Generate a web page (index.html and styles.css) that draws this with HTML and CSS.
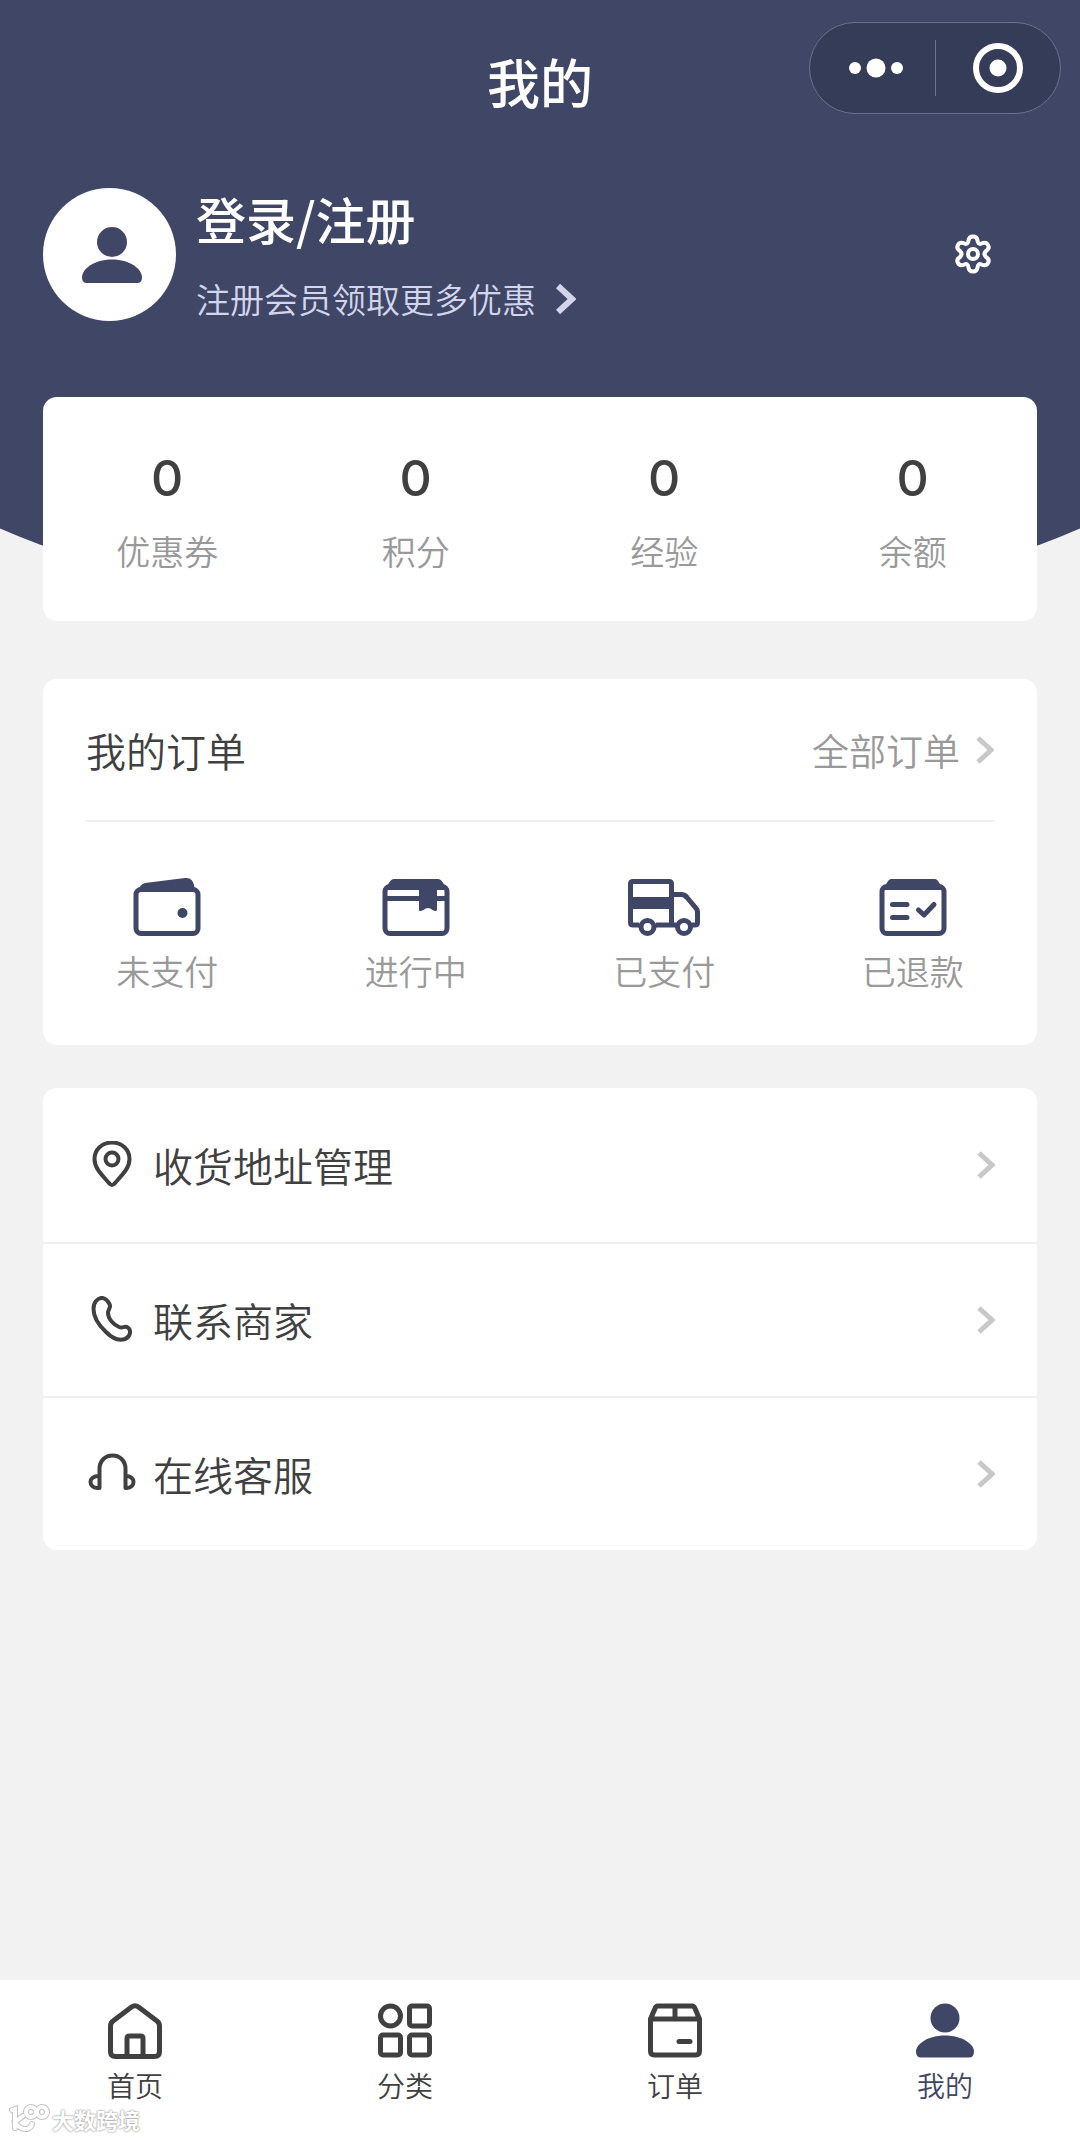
FILE: index.html
```html
<!DOCTYPE html>
<html lang="zh-CN">
<head>
<meta charset="utf-8">
<meta name="viewport" content="width=device-width, initial-scale=1">
<title>我的</title>
<link rel="stylesheet" href="styles.css">
</head>
<body>
<div class="page">
  <header class="hero">
    <div class="navbar">
      <h1 class="navbar-title">我的</h1>
      <div class="capsule">
        <button class="capsule-btn" type="button" aria-label="更多">
          <svg width="60" height="20" viewBox="0 0 60 20" fill="currentColor"><circle cx="12" cy="10" r="6"/><circle cx="33" cy="10" r="9.500"/><circle cx="54" cy="10" r="6"/></svg>
        </button>
        <button class="capsule-btn" type="button" aria-label="关闭">
          <svg width="52" height="52" viewBox="0 0 52 52"><circle cx="26" cy="26" r="22" fill="none" stroke="currentColor" stroke-width="6"/><circle cx="26" cy="26" r="8.500" fill="currentColor"/></svg>
        </button>
      </div>
    </div>

    <div class="profile">
      <div class="avatar">
        <svg width="64" height="57" viewBox="0 0 64 57" fill="currentColor"><circle cx="34" cy="16" r="15"/><path d="M34 33.500C52 33.500 64 43 64 51.500Q64 57 59 57H9Q4 57 4 51.500C4 43 16 33.500 34 33.500Z"/></svg>
      </div>
      <div class="profile-text">
        <a class="profile-login" href="#login">登录/注册</a>
        <a class="profile-promo" href="#member">注册会员领取更多优惠
          <svg width="20" height="32" viewBox="0 0 20 32" fill="none" stroke="currentColor" stroke-width="6"><path d="M2 3L16 16L2 29"/></svg>
        </a>
      </div>
      <button class="settings" type="button" aria-label="设置">
        <svg width="36" height="40" viewBox="0 0 36 40" fill="none" stroke="currentColor" stroke-width="4" stroke-linejoin="round"><path d="M13.500 6.500Q14 2.500 18 2.500T22.500 6.500Q23 11 26.500 9.500Q31 7.500 33 11T31 17Q28 20 31 23Q35 25.500 33 29T26.500 30.500Q23 29 22.500 33.500Q22 37.500 18 37.500T13.500 33.500Q13 29 9.500 30.500Q5 32.500 3 29T5 23Q8 20 5 17Q1 14.500 3 11T9.500 9.500Q13 11 13.500 6.500Z"/><circle cx="18" cy="20" r="5"/></svg>
      </button>
    </div>

    <section class="card stats" aria-label="账户">
      <a class="stat" href="#coupons"><span class="stat-value">0</span><span class="caption">优惠券</span></a>
      <a class="stat" href="#points"><span class="stat-value">0</span><span class="caption">积分</span></a>
      <a class="stat" href="#exp"><span class="stat-value">0</span><span class="caption">经验</span></a>
      <a class="stat" href="#balance"><span class="stat-value">0</span><span class="caption">余额</span></a>
    </section>
  </header>

  <main class="content">
    <section class="card orders">
      <div class="orders-head">
        <h2 class="orders-title">我的订单</h2>
        <a class="orders-all" href="#orders">全部订单
          <svg class="chevron" viewBox="0 0 18 28"><path d="M2 2L15 14L2 26"/></svg>
        </a>
      </div>
      <div class="orders-grid">
        <a class="order-link" href="#unpaid">
          <svg width="68" height="60" viewBox="0 0 68 60"><path d="M5 14Q7 7 12 6L52 1Q60 0 61.500 10L64 15H4Z" fill="currentColor"/><rect x="3" y="12.500" width="62" height="44" rx="5" fill="none" stroke="currentColor" stroke-width="5"/><circle cx="49.500" cy="36" r="5" fill="currentColor"/></svg>
          <span class="caption">未支付</span>
        </a>
        <a class="order-link" href="#processing">
          <svg width="68" height="60" viewBox="0 0 68 60"><path d="M5 10Q8 2 12 2H56Q60 2 63 10V13H5ZM37 10H55V33Q54 35 50.500 33Q46 29 41.500 33Q37 35 37 33Z" fill="currentColor"/><path d="M3 21.500H65" stroke="currentColor" stroke-width="5"/><rect x="3" y="9.500" width="62" height="47" rx="5" fill="none" stroke="currentColor" stroke-width="5"/></svg>
          <span class="caption">进行中</span>
        </a>
        <a class="order-link" href="#paid">
          <svg width="74" height="60" viewBox="0 0 74 60" fill="none" stroke="currentColor" stroke-width="5" stroke-linejoin="round"><path d="M12 48H6Q3.500 48 3.500 45.500V7Q3.500 4.500 6 4.500H42Q44.500 4.500 44.500 7V48M29 48H49M44.500 17.500H54Q58 17.500 60 20.500L68 30Q70.500 32.500 70.500 35V45.500Q70.500 48 68 48H65"/><path d="M4 26H44" stroke-width="12"/><circle cx="20.500" cy="50" r="6.500"/><circle cx="57" cy="50" r="6.500"/></svg>
          <span class="caption">已支付</span>
        </a>
        <a class="order-link" href="#refunded">
          <svg width="68" height="60" viewBox="0 0 68 60"><path d="M6 10Q9 2 12 2H56Q59 2 62 10V13H6Z" fill="currentColor"/><g fill="none" stroke="currentColor" stroke-width="5"><rect x="3" y="9.500" width="62" height="47" rx="5"/><path stroke-linecap="round" d="M13.500 27.500H28M13.500 40.500H28"/><path stroke-linecap="round" stroke-linejoin="round" d="M39.500 33L45 38L55 27.500"/></g></svg>
          <span class="caption">已退款</span>
        </a>
      </div>
    </section>

    <nav class="card menu" aria-label="服务">
      <a class="menu-row" href="#address">
        <svg class="menu-icon" viewBox="0 0 48 48"><path d="M24 44Q22.500 44 21 42C13 33 6.500 27 6.500 18C6.500 8.500 14 1.500 24 1.500S41.500 8.500 41.500 18C41.500 27 35 33 27 42Q25.500 44 24 44Z"/><circle cx="24" cy="18" r="6.500"/></svg>
        <span class="menu-label">收货地址管理</span>
        <svg class="chevron" viewBox="0 0 18 28"><path d="M2 2L15 14L2 26"/></svg>
      </a>
      <a class="menu-row" href="#contact">
        <svg class="menu-icon" viewBox="0 0 48 48"><path d="M8 5C13 -.5 18 2 21.500 8C23.500 11.500 20 13 20 17C20 23 26 29 31 31C35 32.500 36 30 39 31C44 33.500 42.500 41 37 43C31 45 24 42 18 36C10 28.500 5.500 20 5.500 13Q5.500 8 8 5Z"/></svg>
        <span class="menu-label">联系商家</span>
        <svg class="chevron" viewBox="0 0 18 28"><path d="M2 2L15 14L2 26"/></svg>
      </a>
      <a class="menu-row" href="#service">
        <svg class="menu-icon" viewBox="0 0 48 48"><path d="M11.500 24.500V38H9C5 38 2.500 35 2.500 32S5 26 11.500 26M11.500 26V19C11.500 11 17 5.500 24.500 5.500S37.500 11 37.500 19V38H39C43 38 45.500 35 45.500 32S43 26 37.500 26"/></svg>
        <span class="menu-label">在线客服</span>
        <svg class="chevron" viewBox="0 0 18 28"><path d="M2 2L15 14L2 26"/></svg>
      </a>
    </nav>
  </main>

  <nav class="tabbar" aria-label="主导航">
    <a class="tab" href="#home">
      <svg width="58" height="58" viewBox="0 0 58 58"><path d="M4.500 24Q4.500 21 7 19L25.500 5Q29 2.500 32.500 5L51 19Q53.500 21 53.500 24V49.500Q53.500 54.500 48.500 54.500H9.500Q4.500 54.500 4.500 49.500ZM21 54V36.500Q21 34 23.500 34H34.500Q37 34 37 36.500V54"/></svg>
      首页
    </a>
    <a class="tab" href="#category">
      <svg width="58" height="58" viewBox="0 0 58 58"><circle cx="14.500" cy="14" r="10"/><rect x="33.500" y="4" width="20" height="20" rx="2.500"/><rect x="4.500" y="33" width="20" height="20" rx="2.500"/><rect x="33.500" y="33" width="20" height="20" rx="2.500"/></svg>
      分类
    </a>
    <a class="tab" href="#orders">
      <svg width="58" height="58" viewBox="0 0 58 58"><path d="M4.500 17V49Q4.500 53 8.500 53H49.500Q53.500 53 53.500 49V17L49 6.500Q48 4 46 4H12Q10 4 9 6.500ZM4.500 17H53.500M29 4V17"/><path d="M33 39.500H44" stroke-linecap="round"/></svg>
      订单
    </a>
    <a class="tab tab-active" href="#me" aria-current="page">
      <svg width="58" height="58" viewBox="0 0 58 58"><g fill="currentColor" stroke="none"><circle cx="29" cy="16" r="14.500"/><path d="M29 33.500C46 33.500 58 42 58 49.500Q58 55.500 53 55.500H5Q0 55.500 0 49.500C0 42 12 33.500 29 33.500Z"/></g></svg>
      我的
    </a>
    <div class="watermark">
      <svg width="42" height="30" viewBox="0 0 42 30" fill="none" stroke-linecap="round"><g stroke="#c4c4c4" stroke-width="6"><path d="M3 6L6 5V24M14 12L6 18Q11 26 18 25Q22 24 23 20"/><circle cx="22" cy="8" r="5"/><circle cx="33" cy="8" r="5"/></g><g stroke="#fff" stroke-width="4"><path d="M3 6L6 5V24M14 12L6 18Q11 26 18 25Q22 24 23 20"/><circle cx="22" cy="8" r="5"/><circle cx="33" cy="8" r="5"/></g></svg>
      <span>大数跨境</span>
    </div>
  </nav>
</div>
</body>
</html>
```
FILE: styles.css
```css
:root {
  --navy: #3f4666;
  --ink: #404040;
  --muted: #999;
  --line: #f0f0f0;
}

* {
  box-sizing: border-box;
}

body {
  margin: 0;
  background: #f2f2f2;
  color: var(--ink);
  font-family: "Noto Sans CJK SC", sans-serif;
  font-weight: 350;
}

a {
  color: inherit;
  text-decoration: none;
}

button {
  padding: 0;
  border: 0;
  background: none;
  color: inherit;
}

svg {
  display: block;
  flex: none;
}

.page {
  display: flex;
  flex-direction: column;
  min-height: 100vh;
  overflow-x: clip;
}

.card {
  border-radius: 14px;
  background: #fff;
}

.caption {
  color: var(--muted);
  font-size: 34px;
  line-height: 48px;
}

.chevron {
  width: 18px;
  height: 28px;
  fill: none;
  stroke: #c8c8c8;
  stroke-width: 5;
}

/* Header */
.hero {
  position: relative;
  isolation: isolate;
  padding: 0 43px;
  color: #fff;
}

.hero::before {
  content: "";
  position: absolute;
  inset: 0 -10% 7px;
  z-index: -1;
  border-radius: 0 0 50% 50% / 0 0 191px 191px;
  background: var(--navy);
}

.navbar {
  display: grid;
  grid-template-columns: 1fr auto 1fr;
  align-items: center;
  height: 136px;
  margin-right: -24px;
}

.navbar-title {
  grid-column: 2;
  margin: 26px 0 0 -24px;
  font-size: 53px;
  font-weight: 500;
  line-height: 72px;
}

.capsule {
  display: grid;
  grid-template-columns: 1fr 1fr;
  justify-self: end;
  width: 252px;
  height: 92px;
  border: 1px solid #6b7190;
  border-radius: 46px;
  background: #343c58;
}

.capsule-btn {
  display: grid;
  place-items: center;
}

.capsule-btn + .capsule-btn {
  margin: 17px 0;
  border-left: 1px solid #6b7190;
}

.profile {
  display: flex;
  align-items: center;
  gap: 20px;
  padding: 45px 46px 70px 0;
}

.avatar {
  display: grid;
  flex: none;
  place-items: center;
  width: 133px;
  height: 133px;
  border-radius: 50%;
  background: #fff;
  color: var(--navy);
}

.profile-text {
  display: flex;
  flex: 1;
  flex-direction: column;
  align-items: flex-start;
  gap: 16px;
}

.profile-login {
  font-size: 50px;
  font-weight: 500;
  line-height: 74px;
}

.profile-promo {
  display: flex;
  align-items: center;
  gap: 20px;
  color: #d3d5ec;
  font-size: 34px;
  line-height: 56px;
}

.stats {
  display: grid;
  grid-template-columns: repeat(4, 1fr);
  padding: 49px 0 46px;
}

.stat {
  display: flex;
  flex-direction: column;
  align-items: center;
  gap: 17px;
}

.stat-value {
  color: var(--ink);
  font-family: Inter, "Noto Sans CJK SC", sans-serif;
  font-size: 50px;
  font-weight: 500;
  line-height: 64px;
}

/* Cards */
.content {
  display: flex;
  flex: 1;
  flex-direction: column;
  gap: 43px;
  padding: 58px 43px 43px;
}

.orders {
  padding: 0 43px 50px;
}

.orders-head {
  display: flex;
  align-items: center;
  justify-content: space-between;
  height: 143px;
  border-bottom: 2px solid var(--line);
}

.orders-title {
  margin: 0;
  font-size: 40px;
  font-weight: 350;
}

.orders-all {
  display: flex;
  align-items: center;
  gap: 16px;
  color: var(--muted);
  font-size: 37px;
}

.orders-grid {
  display: grid;
  grid-template-columns: repeat(4, 1fr);
  margin: 55px -43px 0;
}

.order-link {
  display: flex;
  flex-direction: column;
  align-items: center;
  gap: 10px;
  color: var(--navy);
}

.menu-row {
  display: flex;
  align-items: center;
  gap: 17px;
  height: 154px;
  padding: 0 42px 0 45px;
}

.menu-row + .menu-row {
  border-top: 2px solid var(--line);
}

.menu-icon {
  width: 48px;
  height: 48px;
  fill: none;
  stroke: currentColor;
  stroke-width: 4;
  stroke-linejoin: round;
}

.menu-label {
  flex: 1;
  font-size: 40px;
}

/* Tab bar */
.tabbar {
  position: sticky;
  bottom: 0;
  display: grid;
  grid-template-columns: repeat(4, 1fr);
  padding: 22px 0 34px;
  background: #fff;
}

.tab {
  display: flex;
  flex-direction: column;
  align-items: center;
  gap: 5px;
  font-size: 28px;
  line-height: 40px;
}

.tab svg {
  fill: none;
  stroke: currentColor;
  stroke-width: 5;
  stroke-linejoin: round;
}

.tab-active {
  color: var(--navy);
}

.watermark {
  position: absolute;
  bottom: 4px;
  left: 9px;
  display: flex;
  align-items: center;
  gap: 1px;
  color: #fff;
  font-size: 22px;
  font-weight: 700;
  line-height: 32px;
  text-shadow: 0 0 2px #999, 0 0 2px #aaa;
}
```
